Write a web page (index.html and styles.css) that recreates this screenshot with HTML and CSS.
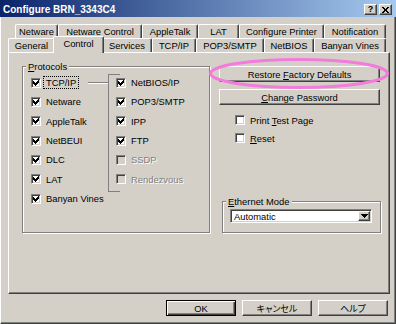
FILE: index.html
```html
<!DOCTYPE html>
<html lang="ja">
<head>
  <meta charset="UTF-8">
  <title>Configure BRN_3343C4</title>
  <link rel="stylesheet" href="styles.css">
</head>
<body>

  <div class="window">
    <div class="titlebar">
      <span class="title">Configure BRN_3343C4</span>
      <span class="cap-btn">?</span>
      <span class="cap-btn">
        <svg width="7" height="6" viewBox="0 0 7 6"><path d="M0 0h2v1h1v1h1V1h1V0h2v1H6v1H5v2h1v1h1v1H5V5H4V4H3v1H2v1H0V5h1V4h1V2H1V1H0z"/></svg>
      </span>
    </div>

    <div class="client">
      <!-- Tab-reiter i to rækker -->
      <div class="tabrow back">
        <span class="tab">Netware</span>
        <span class="tab">Netware Control</span>
        <span class="tab">AppleTalk</span>
        <span class="tab">LAT</span>
        <span class="tab">Configure Printer</span>
        <span class="tab">Notification</span>
      </div>
      <div class="tabrow front">
        <span class="tab">General</span>
        <span class="tab active">Control</span>
        <span class="tab">Services</span>
        <span class="tab">TCP/IP</span>
        <span class="tab">POP3/SMTP</span>
        <span class="tab">NetBIOS</span>
        <span class="tab">Banyan Vines</span>
      </div>

      <div class="panel">
        <div class="group protocols">
          <span class="legend"><u>P</u>rotocols</span>
          <div class="col">
            <div class="check">
              <span class="box"><svg class="tick" viewBox="0 0 8 8"><path d="M1 2h1v3H1zM2 3h1v3H2zM3 4h1v3H3zM4 3h1v3H4zM5 2h1v3H5zM6 1h1v3H6z"/></svg></span>
              <span class="text focus">TCP/IP</span>
              <span class="link"></span>
            </div>
            <div class="check">
              <span class="box"><svg class="tick" viewBox="0 0 8 8"><path d="M1 2h1v3H1zM2 3h1v3H2zM3 4h1v3H3zM4 3h1v3H4zM5 2h1v3H5zM6 1h1v3H6z"/></svg></span>
              <span class="text">Netware</span>
            </div>
            <div class="check">
              <span class="box"><svg class="tick" viewBox="0 0 8 8"><path d="M1 2h1v3H1zM2 3h1v3H2zM3 4h1v3H3zM4 3h1v3H4zM5 2h1v3H5zM6 1h1v3H6z"/></svg></span>
              <span class="text">AppleTalk</span>
            </div>
            <div class="check">
              <span class="box"><svg class="tick" viewBox="0 0 8 8"><path d="M1 2h1v3H1zM2 3h1v3H2zM3 4h1v3H3zM4 3h1v3H4zM5 2h1v3H5zM6 1h1v3H6z"/></svg></span>
              <span class="text">NetBEUI</span>
            </div>
            <div class="check">
              <span class="box"><svg class="tick" viewBox="0 0 8 8"><path d="M1 2h1v3H1zM2 3h1v3H2zM3 4h1v3H3zM4 3h1v3H4zM5 2h1v3H5zM6 1h1v3H6z"/></svg></span>
              <span class="text">DLC</span>
            </div>
            <div class="check">
              <span class="box"><svg class="tick" viewBox="0 0 8 8"><path d="M1 2h1v3H1zM2 3h1v3H2zM3 4h1v3H3zM4 3h1v3H4zM5 2h1v3H5zM6 1h1v3H6z"/></svg></span>
              <span class="text">LAT</span>
            </div>
            <div class="check">
              <span class="box"><svg class="tick" viewBox="0 0 8 8"><path d="M1 2h1v3H1zM2 3h1v3H2zM3 4h1v3H3zM4 3h1v3H4zM5 2h1v3H5zM6 1h1v3H6z"/></svg></span>
              <span class="text">Banyan Vines</span>
            </div>
          </div>

          <div class="col sub">
            <div class="check">
              <span class="box"><svg class="tick" viewBox="0 0 8 8"><path d="M1 2h1v3H1zM2 3h1v3H2zM3 4h1v3H3zM4 3h1v3H4zM5 2h1v3H5zM6 1h1v3H6z"/></svg></span>
              <span class="text">NetBIOS/IP</span>
            </div>
            <div class="check">
              <span class="box"><svg class="tick" viewBox="0 0 8 8"><path d="M1 2h1v3H1zM2 3h1v3H2zM3 4h1v3H3zM4 3h1v3H4zM5 2h1v3H5zM6 1h1v3H6z"/></svg></span>
              <span class="text">POP3/SMTP</span>
            </div>
            <div class="check">
              <span class="box"><svg class="tick" viewBox="0 0 8 8"><path d="M1 2h1v3H1zM2 3h1v3H2zM3 4h1v3H3zM4 3h1v3H4zM5 2h1v3H5zM6 1h1v3H6z"/></svg></span>
              <span class="text">IPP</span>
            </div>
            <div class="check">
              <span class="box"><svg class="tick" viewBox="0 0 8 8"><path d="M1 2h1v3H1zM2 3h1v3H2zM3 4h1v3H3zM4 3h1v3H4zM5 2h1v3H5zM6 1h1v3H6z"/></svg></span>
              <span class="text">FTP</span>
            </div>
            <div class="check off">
              <span class="box"></span>
              <span class="text">SSDP</span>
            </div>
            <div class="check off">
              <span class="box"></span>
              <span class="text">Rendezvous</span>
            </div>
          </div>
        </div>

        <div class="side">
          <button class="btn wide"><span>Restore <u>F</u>actory Defaults</span></button>
          <button class="btn wide"><span><u>C</u>hange Password</span></button>
          <div class="options">
            <div class="check">
              <span class="box"></span>
              <span class="text">Print <u>T</u>est Page</span>
            </div>
            <div class="check">
              <span class="box"></span>
              <span class="text"><u>R</u>eset</span>
            </div>
          </div>
          <div class="group ethernet">
            <span class="legend"><u>E</u>thernet Mode</span>
            <div class="select">
              <span class="value">Automatic</span>
              <span class="drop">
                <svg width="7" height="4" viewBox="0 0 7 4"><path d="M0 0h7v1H6v1H5v1H4v1H3V3H2V2H1V1H0z"/></svg>
              </span>
            </div>
          </div>
        </div>
      </div>

      <div class="actions">
        <button class="btn default"><span>OK</span></button>
        <button class="btn jp"><span>キャンセル</span></button>
        <button class="btn jp"><span>ヘルプ</span></button>
      </div>
    </div>

    <!-- pink markering rundt om knappen -->
    <svg class="highlight" width="396" height="324">
      <ellipse cx="299" cy="73.5" rx="88.5" ry="14" fill="none" stroke="#f27bdc" stroke-width="3" />
    </svg>
  </div>

</body>
</html>
```

FILE: styles.css
```css
* {
  box-sizing: border-box;
}
body {
  margin: 0;
  font-family: "Liberation Sans", "Noto Sans CJK JP", sans-serif;
  font-size: 9.4px;
  color: #000;
}
.window {
  position: relative;
  width: 396px;
  height: 324px;
  display: flex;
  flex-direction: column;
  background: #d4d0c8;
}
.titlebar {
  height: 17px;
  display: flex;
  align-items: center;
  padding: 2px 4px 0 3px;
  background: linear-gradient(to right, #0a246a, #a6caf0);
  color: #fff;
  font-size: 10px;
  font-weight: bold;
}
.title {
  flex: 1;
}
.cap-btn {
  width: 13px;
  height: 11px;
  margin-left: 2px;
  display: flex;
  align-items: center;
  justify-content: center;
  background: #d4d0c8;
  color: #000;
  font-size: 9px;
  line-height: 9px;
  border: 1px solid;
  border-color: #fff #404040 #404040 #fff;
  box-shadow: inset -1px -1px #808080;
}
.cap-btn svg {
  display: block;
}
.client {
  flex: 1;
  padding: 7px 5px 7px 7px;
  border-left: 1px solid #fff;
  border-right: 1px solid #404040;
  border-bottom: 1px solid #404040;
  box-shadow: inset -1px -1px #808080;
}

/* faneblade */
.tabrow {
  display: grid;
  height: 14px;
}
.tabrow.back {
  margin-left: 7px;
  grid-template-columns: 43px 84px 56px 41px 85px 62px;
}
.tabrow.front {
  grid-template-columns: 47px 47px 50px 44px 68px 50px 72px;
}
.tab {
  display: flex;
  align-items: center;
  justify-content: center;
  padding-bottom: 1px;
  white-space: nowrap;
  background: #d4d0c8;
  border: 1px solid #fff;
  border-right-color: #404040;
  border-bottom: none;
  border-radius: 2px 2px 0 0;
  box-shadow: inset -1px 0 #808080;
}
.tab.active {
  position: relative;
  z-index: 1;
  margin: -2px -2px -1px;
  padding-bottom: 3px;
}

.panel {
  height: 242px;
  display: grid;
  grid-template-columns: 188px 162px;
  align-content: start;
  column-gap: 9px;
  padding: 13px 0 0 13px;
  border: 1px solid #fff;
  border-right-color: #404040;
  border-bottom-color: #404040;
  box-shadow: inset -1px -1px #808080;
}

/* gruppebokse */
.group {
  position: relative;
  border: 1px solid #808080;
  box-shadow: 1px 1px #fff, inset 1px 1px #fff;
}
.legend {
  position: absolute;
  top: -6px;
  left: 3px;
  padding: 0 2px;
  line-height: 11px;
  background: #d4d0c8;
}
.protocols {
  width: 188px;
  height: 167px;
  display: grid;
  grid-template-columns: 77px auto;
  align-items: start;
  padding: 6px 0 0 8px;
}
.check {
  display: flex;
  align-items: center;
  height: 19.33px;
  white-space: nowrap;
}
.box {
  flex: none;
  width: 10px;
  height: 10px;
  background: #fff;
  border: 1px solid;
  border-color: #808080 #fff #fff #808080;
  box-shadow: inset 1px 1px #404040, inset -1px -1px #d4d0c8;
}
.tick {
  display: block;
  width: 8px;
  height: 8px;
}
.text {
  margin-left: 2px;
  padding: 0 2px;
  line-height: 11px;
  border: 1px solid transparent;
}
.text.focus {
  border: 1px dotted #000;
}
.link {
  flex: none;
  width: 20px;
  height: 2px;
  margin-left: auto;
  border-top: 1px solid #808080;
  border-bottom: 1px solid #fff;
}
.check.off .box {
  background: #d4d0c8;
}
.check.off .text {
  color: #808080;
  text-shadow: 1px 1px #fff;
}
.sub {
  position: relative;
  padding-left: 8px;
}
.sub::before,
.sub::after {
  content: "";
  position: absolute;
  top: 1px;
  left: 0;
  width: 11px;
  height: 116px;
  border: 1px solid #808080;
  border-right: none;
}
.sub::after {
  top: 2px;
  left: 1px;
  border-color: #fff;
  z-index: -1;
}

/* højre kolonne */
.side {
  display: flex;
  flex-direction: column;
  align-items: flex-start;
}
.btn {
  display: flex;
  align-items: center;
  justify-content: center;
  height: 16px;
  padding: 0;
  font: inherit;
  color: #000;
  white-space: nowrap;
  background: #d4d0c8;
  border: 1px solid;
  border-color: #fff #404040 #404040 #fff;
  box-shadow: inset -1px -1px #808080;
}
.btn.wide {
  width: 161px;
}
.btn.wide + .btn.wide {
  margin-top: 7px;
}
.options {
  margin: 6px 0 0 16px;
}
.options .check {
  height: 18px;
}
.ethernet {
  width: 159px;
  height: 32px;
  margin: auto 0 0 3px;
  padding: 7px 0 0 7px;
}
.select {
  display: flex;
  align-items: center;
  width: 142px;
  height: 14px;
  padding: 1px;
  background: #fff;
  border: 1px solid;
  border-color: #808080 #fff #fff #808080;
  box-shadow: inset 1px 1px #404040, inset -1px -1px #d4d0c8;
}
.select .value {
  flex: 1;
  padding-left: 2px;
}
.drop {
  width: 12px;
  height: 10px;
  display: flex;
  align-items: center;
  justify-content: center;
  background: #d4d0c8;
  border: 1px solid;
  border-color: #fff #404040 #404040 #fff;
  box-shadow: inset -1px -1px #808080;
}
.drop svg {
  display: block;
}

/* knapper nederst */
.actions {
  display: flex;
  justify-content: flex-end;
  gap: 6px;
  margin-top: 6px;
  padding-right: 2px;
}
.actions .btn {
  width: 70px;
}
.btn.default {
  border-color: #000;
  box-shadow: inset 1px 1px #fff, inset -1px -1px #404040, inset -2px -2px #808080;
}
.btn.jp {
  font-size: 9px;
  font-feature-settings: "palt";
}

.highlight {
  position: absolute;
  top: 0;
  left: 0;
  pointer-events: none;
}
```
